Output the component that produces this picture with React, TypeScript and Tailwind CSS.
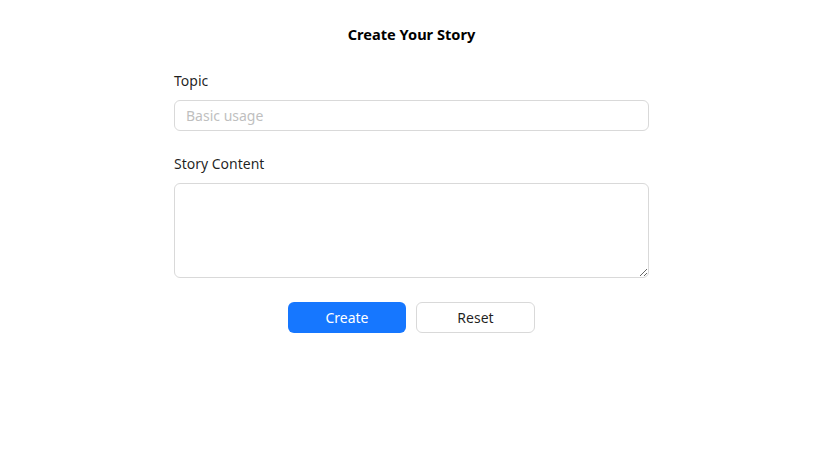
// simple story form, ant-design look
import { useState } from "react";

export default function App() {
  const [topic, setTopic] = useState("");
  const [content, setContent] = useState("");

  const handleReset = () => {
    setTopic("");
    setContent("");
  };

  return (
    <div
      className="min-h-screen bg-white pr-[2px] text-[14px] text-[rgba(0,0,0,0.88)]"
      style={{ fontFamily: '"Noto Sans", "Open Sans", sans-serif' }}
    >
      <div className="mx-auto w-[475px] pt-[22px]">
        <h1 className="text-center text-[14.6px] font-bold leading-6 text-black">
          Create Your Story
        </h1>

        <form className="mt-[24px]" onSubmit={(e) => e.preventDefault()}>
          <label className="block pb-2 leading-[22px]">Topic</label>
          <input
            value={topic}
            onChange={(e) => setTopic(e.target.value)}
            placeholder="Basic usage"
            className="block h-[31px] w-full rounded-md border border-[#d9d9d9] px-[11px] outline-none placeholder:text-[#bfbfbf] focus:border-[#4096ff]"
          />

          <label className="mt-[22px] block pb-2 leading-[22px]">
            Story Content
          </label>
          <textarea
            value={content}
            onChange={(e) => setContent(e.target.value)}
            className="block h-[95px] w-full rounded-md border border-[#d9d9d9] px-[11px] py-1 outline-none focus:border-[#4096ff]"
          />

          <div className="mt-[24px] flex justify-center gap-[10px]">
            <button
              type="submit"
              className="h-[31px] w-[118px] rounded-md bg-[#1677ff] text-white"
            >
              Create
            </button>
            <button
              type="button"
              onClick={handleReset}
              className="h-[31px] w-[119px] rounded-md border border-[#d9d9d9] bg-white"
            >
              Reset
            </button>
          </div>
        </form>
      </div>
    </div>
  );
}
